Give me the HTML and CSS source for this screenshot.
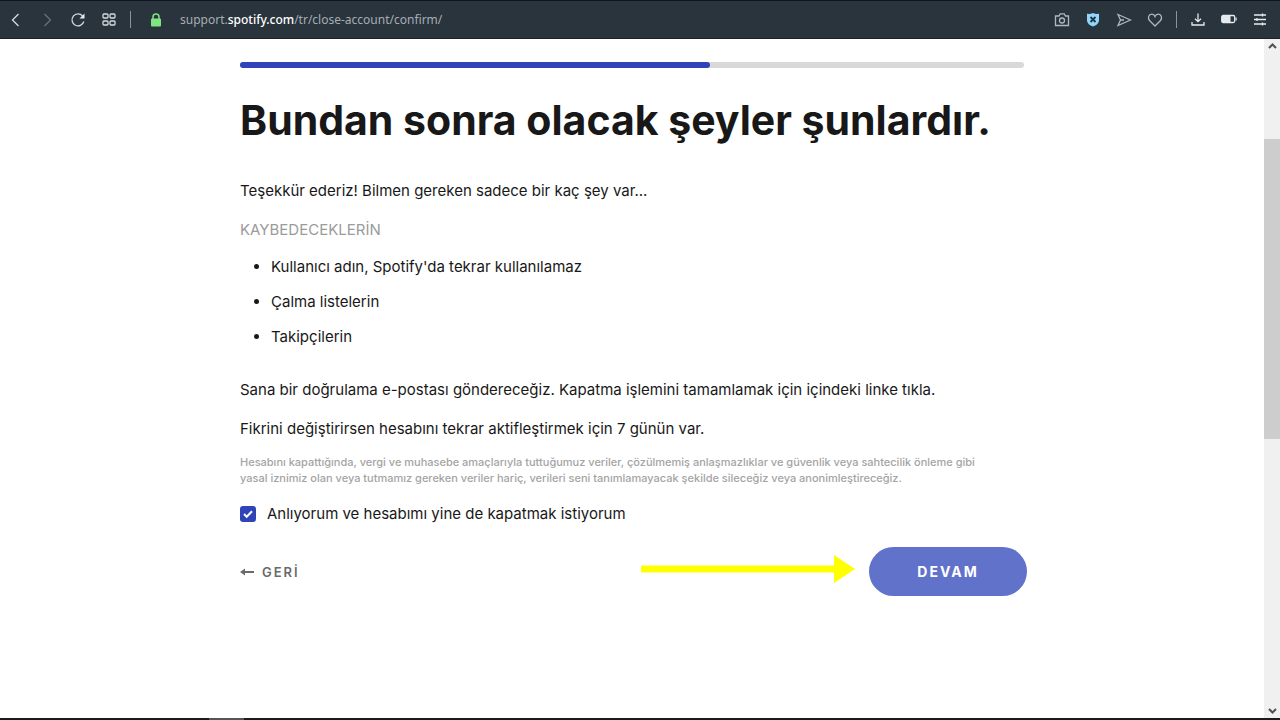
FILE: index.html
```
<!DOCTYPE html>
<html lang="tr">
<head>
    <meta charset="UTF-8">
    <meta name="viewport" content="width=device-width, initial-scale=1">
    <title>Hesabı kapat</title>
    <link rel="stylesheet" href="styles.css">
</head>
<body>
<header class="toolbar">
    <nav class="toolbar-nav">
        <button type="button" aria-label="Geri git">
            <svg width="16" height="16" viewBox="0 0 16 16"><path d="m10.500 2-6 6 6 6"/></svg>
        </button>
        <button type="button" class="dim" aria-label="İleri git">
            <svg width="16" height="16" viewBox="0 0 16 16"><path d="m5.500 2 6 6-6 6"/></svg>
        </button>
        <button type="button" aria-label="Yenile">
            <svg width="16" height="16" viewBox="0 0 16 16"><path d="M13.800 9.500A6 6 0 1 1 12.600 4"/><path class="fill" d="M14.500 1.500v5h-5z"/></svg>
        </button>
        <button type="button" aria-label="Hızlı erişim">
            <svg width="16" height="16" viewBox="0 0 16 16"><rect x="2" y="2" width="5" height="4" rx="1"/><rect x="9" y="2" width="5" height="4" rx="1"/><rect x="2" y="9" width="5" height="4" rx="1"/><rect x="9" y="9" width="5" height="4" rx="1"/></svg>
        </button>
    </nav>
    <span class="divider"></span>
    <svg class="lock" width="12" height="14" viewBox="0 0 12 14"><path d="M3 6V4a3 3 0 0 1 6 0v2"/><rect x="1" y="5.500" width="10" height="8" rx="1"/></svg>
    <div class="url">support.<b>spotify.com</b>/tr/close-account/confirm/</div>
    <div class="toolbar-tools">
        <button type="button" aria-label="Ekran görüntüsü">
            <svg width="16" height="16" viewBox="0 0 16 16"><path d="M1.500 4H5l1.200-2.200h4L11.500 4h3v9.500h-13z"/><circle cx="8" cy="8.500" r="2.500"/></svg>
        </button>
        <button type="button" aria-label="Reklam engelleyici">
            <svg width="16" height="16" viewBox="0 0 16 16"><path class="shield" d="M8 1c2 1 4 1 6 .8V8c0 3.500-3 5.500-6 6.500-3-1-6-3-6-6.500V1.800C4 2 6 2 8 1z"/><path class="shield-x" d="m5.500 5 5 5m0-5-5 5"/></svg>
        </button>
        <button type="button" aria-label="Akışım">
            <svg width="16" height="16" viewBox="0 0 16 16"><path d="M2 2.500 14.500 8 2 13.500 4.500 8zM4.500 8H8"/></svg>
        </button>
        <button type="button" aria-label="Favori">
            <svg width="16" height="16" viewBox="0 0 16 16"><path d="M8 14 2.500 8.500C.5 6 1.500 2.200 4.800 2.200 6.500 2.200 7.500 3.200 8 4.500c.5-1.300 1.500-2.300 3.200-2.300 3.300 0 4.300 3.800 2.300 6.300z"/></svg>
        </button>
        <span class="divider"></span>
        <button type="button" class="bright" aria-label="İndirilenler">
            <svg width="16" height="16" viewBox="0 0 16 16"><path d="M8 1.500v8M5 6.700l3 3 3-3M2 10v3h12v-3"/></svg>
        </button>
        <button type="button" class="bright" aria-label="Pil tasarrufu">
            <svg width="16" height="16" viewBox="0 0 16 16"><rect x=".7" y="3.500" width="13" height="7" rx="1.500"/><path class="fill" d="M1 4h8.500v6H1zM14.500 5.500h1.200v3h-1.200z"/></svg>
        </button>
        <button type="button" class="bright" aria-label="Kolay kurulum">
            <svg width="16" height="16" viewBox="0 0 16 16"><path d="M2 3h12M2 7.500h12M2 12h12M10.500 1.500v3M5 6v3M10.500 10.500v3"/></svg>
        </button>
    </div>
</header>

<div class="viewport">
    <main class="page">
        <div class="content">
            <div class="progress"><div class="progress-value"></div></div>
            <h1>Bundan sonra olacak şeyler şunlardır.</h1>
            <p>Teşekkür ederiz! Bilmen gereken sadece bir kaç şey var...</p>
            <h2>KAYBEDECEKLERİN</h2>
            <ul>
                <li>Kullanıcı adın, Spotify'da tekrar kullanılamaz</li>
                <li>Çalma listelerin</li>
                <li>Takipçilerin</li>
            </ul>
            <p>Sana bir doğrulama e-postası göndereceğiz. Kapatma işlemini tamamlamak için içindeki linke tıkla.</p>
            <p>Fikrini değiştirirsen hesabını tekrar aktifleştirmek için 7 günün var.</p>
            <p class="legal">Hesabını kapattığında, vergi ve muhasebe amaçlarıyla tuttuğumuz veriler, çözülmemiş anlaşmazlıklar ve güvenlik veya sahtecilik önleme gibi<br>yasal iznimiz olan veya tutmamız gereken veriler hariç, verileri seni tanımlamayacak şekilde sileceğiz veya anonimleştireceğiz.</p>
            <div class="confirm">
                <input type="checkbox" id="confirm" checked>
                <label for="confirm">Anlıyorum ve hesabımı yine de kapatmak istiyorum</label>
            </div>
            <div class="actions">
                <a href="#" class="back">
                    <svg width="14" height="8" viewBox="0 0 14 8"><path d="M14 4H2"/><path class="head" d="M0 4l5-3.500v7z"/></svg>
                    GERİ
                </a>
                <svg class="pointer" width="214" height="28" viewBox="0 0 214 28"><path d="M0 10.500h193V0l21 14-21 14V17.500H0z"/></svg>
                <button type="button" class="btn-next">DEVAM</button>
            </div>
        </div>
    </main>
    <div class="scrollbar">
        <svg width="16" height="15" viewBox="0 0 16 15"><path d="m5 9 3.500-3.500L12 9"/></svg>
        <div class="track"><div class="thumb"></div></div>
        <svg width="16" height="15" viewBox="0 0 16 15"><path d="m5 6 3.500 3.500L12 6"/></svg>
    </div>
</div>
<div class="taskbar"><span></span></div>
</body>
</html>
```
FILE: styles.css
```
/* reset */
body,h1,h2,p,ul,li,button,input{margin:0;padding:0}
*{box-sizing:border-box}
button{border:0 none;background-color:transparent;cursor:pointer}
svg{display:block;flex:none}
/* //reset */

body{
    display:flex;
    flex-direction:column;
    height:100vh;
    overflow:hidden;
    font-family:"Inter","Liberation Sans",sans-serif;
    font-size:15px;
    line-height:24px;
    color:#181818;
    background:#fff;
}

/* browser toolbar */
.toolbar{
    display:flex;
    flex:none;
    align-items:center;
    height:39px;
    padding:0 12px 0 8px;
    border-top:1px solid #10161f;
    border-bottom:1px solid #1b2228;
    background:#2a343d;
}
.toolbar-nav{
    display:flex;
    gap:15px;
}
.toolbar svg{
    fill:none;
    stroke:#d5dbe0;
    stroke-width:1.3;
}
.toolbar .fill{
    fill:#e6eaed;
    stroke:none;
}
.toolbar .dim svg{
    stroke:#66717a;
}
.toolbar-tools svg{
    stroke:#b0b8bf;
}
.toolbar-tools .bright svg{
    stroke:#e6eaed;
}
.toolbar svg .shield{
    fill:#8fd8fb;
    stroke:none;
}
.toolbar svg .shield-x{
    stroke:#1f3543;
    stroke-width:1.8;
}
.divider{
    width:1px;
    height:17px;
    margin:0 13px;
    background:#8b949b;
}
.toolbar .lock{
    margin:0 18px 0 6px;
    fill:#7fe582;
    stroke:none;
}
.toolbar .lock path{
    fill:none;
    stroke:#7fe582;
    stroke-width:1.5;
}
.url{
    flex:1;
    font-family:"Noto Sans",sans-serif;
    font-size:12px;
    color:#a5adb4;
}
.url b{
    font-weight:500;
    color:#fff;
}
.toolbar-tools{
    display:flex;
    align-items:center;
    gap:15px;
}
.toolbar-tools .divider{
    margin:0 -2px;
}

/* page */
.viewport{
    display:flex;
    flex:1;
    min-height:0;
}
.page{
    flex:1;
    padding:23px 24px 0;
}
.content{
    max-width:784px;
    margin:0 auto;
}
.progress{
    height:6px;
    border-radius:3px;
    background:#d9d9d9;
}
.progress-value{
    width:60%;
    height:6px;
    border-radius:3px;
    background:#2e44b8;
}
h1{
    margin:24px 0 31px;
    font-size:41px;
    font-weight:700;
    line-height:56px;
}
p{
    margin-bottom:15px;
}
h2{
    margin-bottom:13px;
    font-size:15px;
    font-weight:400;
    color:#9b9b9b;
}
ul{
    margin-bottom:29px;
    padding-left:31px;
}
li + li{
    margin-top:11px;
}
.legal{
    margin:-2px 0 16px;
    font-size:11px;
    font-weight:500;
    line-height:16px;
    color:#a4a4a4;
}
.confirm{
    display:flex;
    align-items:center;
    gap:11px;
    margin-bottom:21px;
}
.confirm input{
    appearance:none;
    width:16px;
    height:16px;
    border-radius:3px;
    background:#2e44b8 url("data:image/svg+xml,%3Csvg xmlns='http://www.w3.org/2000/svg' viewBox='0 0 16 16'%3E%3Cpath d='M4 8l2.700 2.700L12 5.200' fill='none' stroke='%23fff' stroke-width='2'/%3E%3C/svg%3E");
}
.actions{
    display:flex;
    align-items:center;
    margin-right:-3px;
}
.back{
    display:flex;
    align-items:center;
    gap:8px;
    font-size:13px;
    font-weight:600;
    letter-spacing:2px;
    color:#6a6a6a;
    text-decoration:none;
}
.back path{
    fill:none;
    stroke:#6a6a6a;
    stroke-width:2;
}
.back .head{
    fill:#6a6a6a;
    stroke:none;
}
.pointer{
    margin:0 14px 6px auto;
    fill:#ff0;
}
.btn-next{
    width:158px;
    height:49px;
    border-radius:25px;
    background:#6172cb;
    font-family:inherit;
    font-size:14px;
    font-weight:700;
    letter-spacing:2px;
    color:#fff;
}

.scrollbar{
    display:flex;
    flex:none;
    flex-direction:column;
    width:16px;
    background:#f0f0f0;
}
.scrollbar path{
    fill:none;
    stroke:#505050;
    stroke-width:2;
}
.track{
    flex:1;
    padding-top:85px;
}
.thumb{
    height:300px;
    background:#cdcdcd;
}
.taskbar{
    flex:none;
    height:2px;
    padding-left:209px;
    background:#1d1a1c;
}
.taskbar span{
    display:block;
    width:35px;
    height:2px;
    background:#555;
}
```
